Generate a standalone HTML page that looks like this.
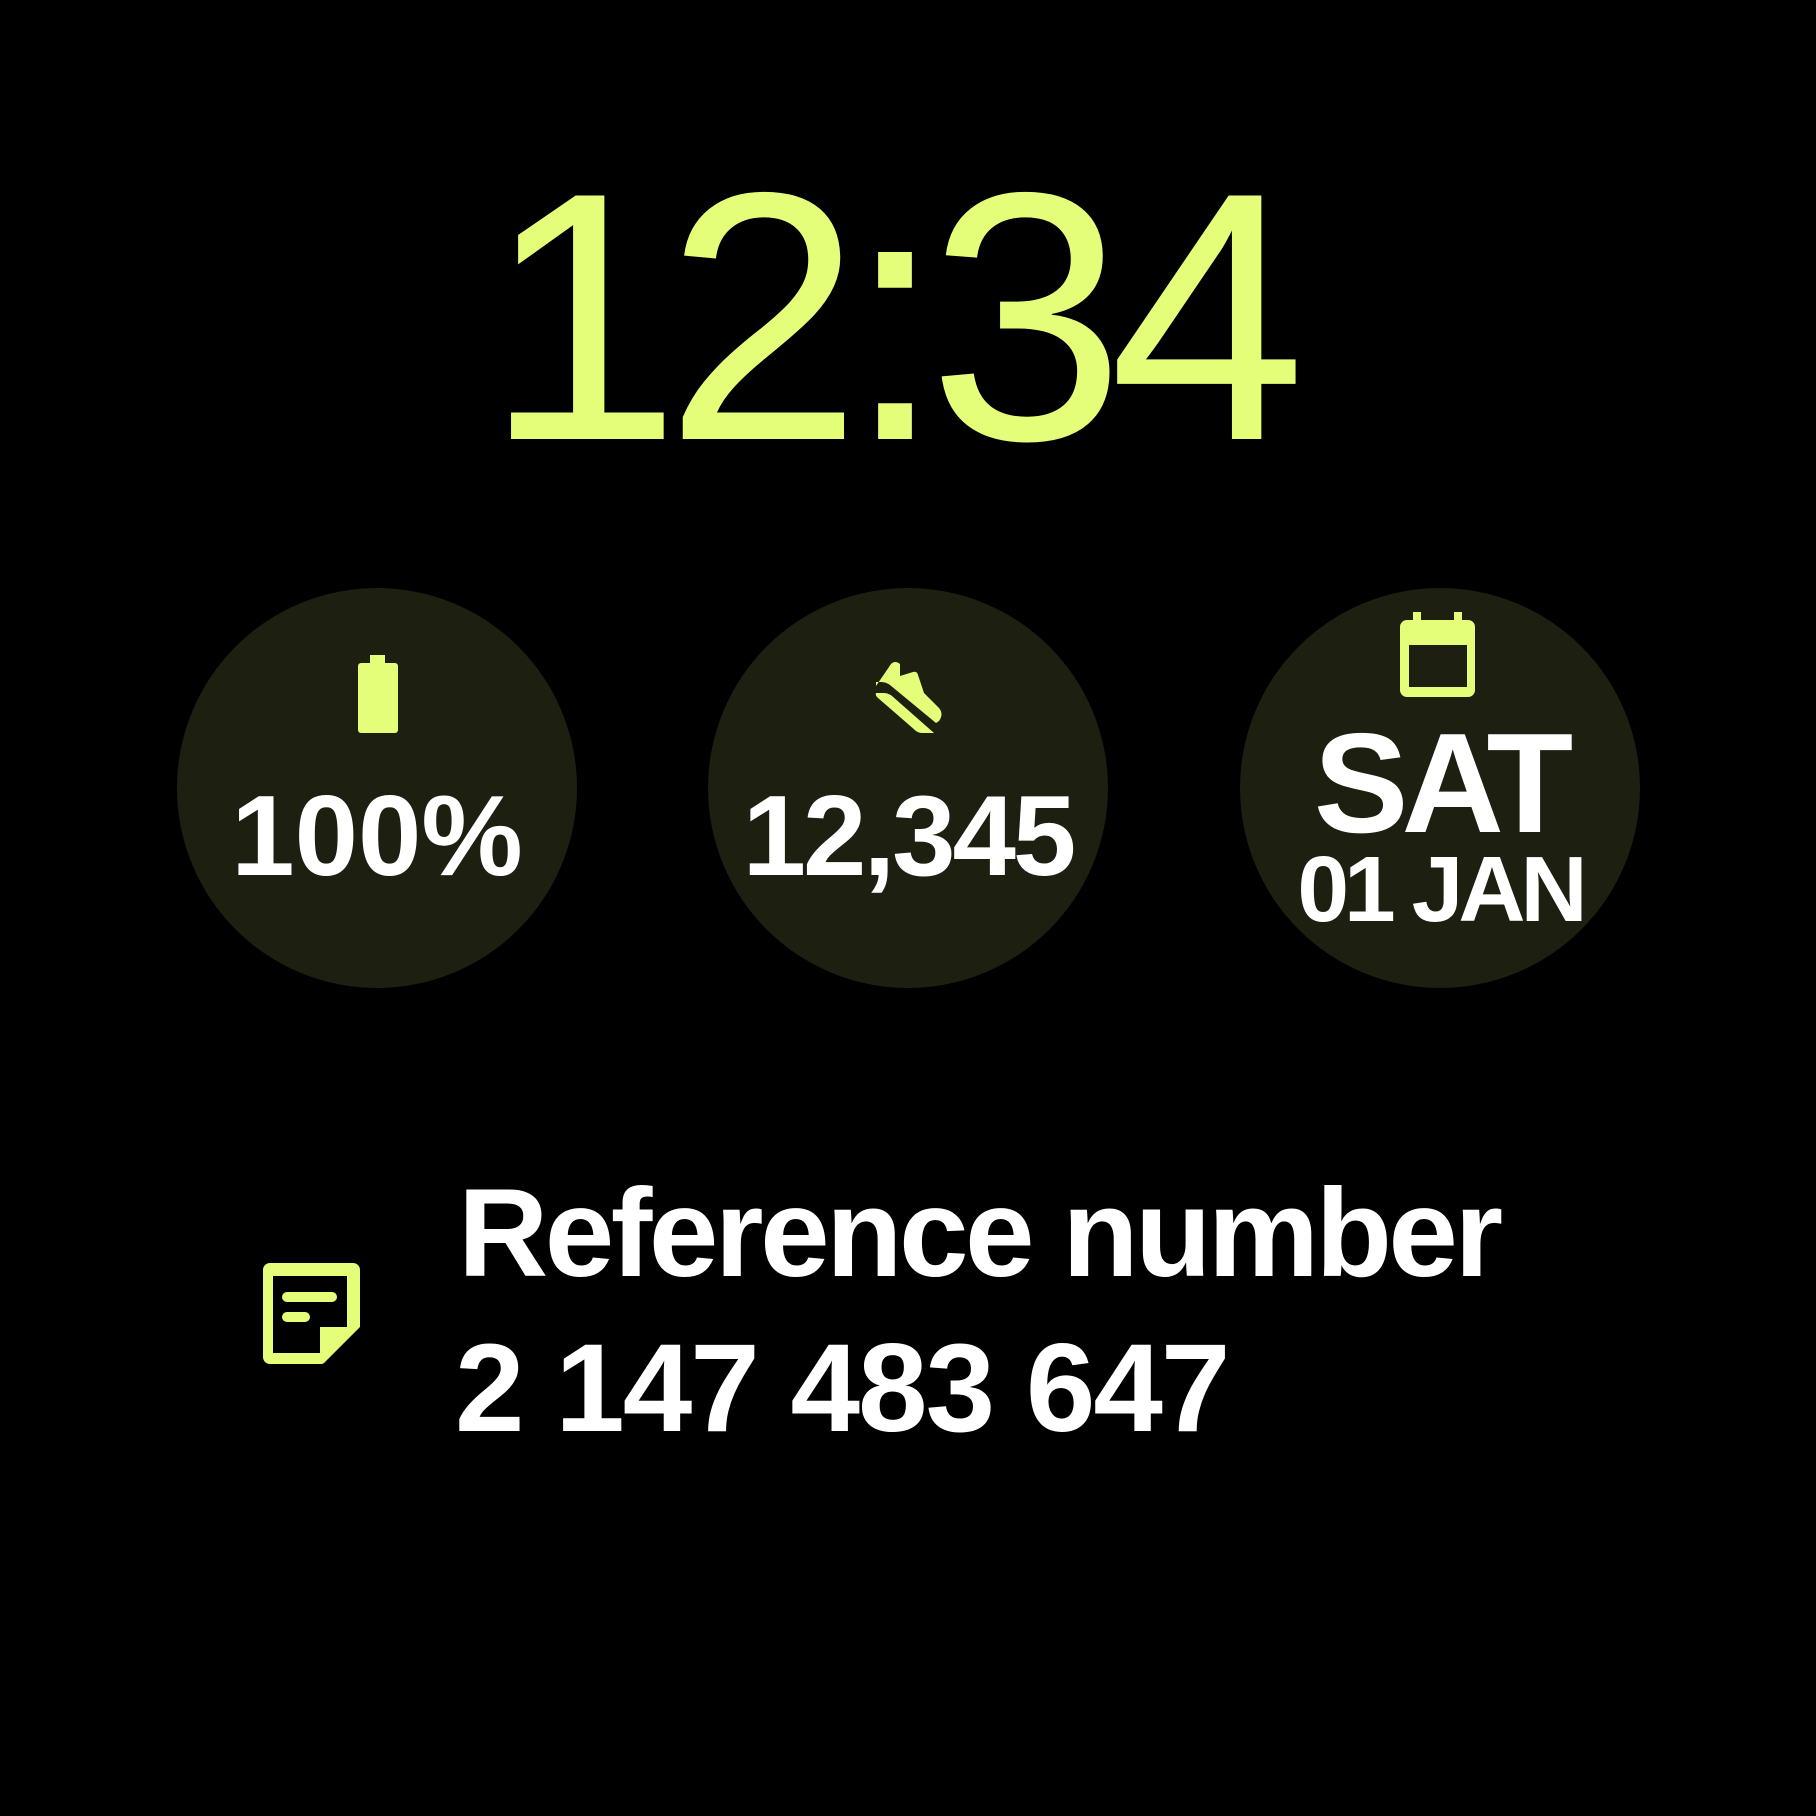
<!DOCTYPE html>
<html><head><style>
body{margin:0;width:1816px;height:1816px;background:#000;position:relative;overflow:hidden;font-family:"Liberation Sans",sans-serif}
.t{position:absolute;white-space:nowrap;line-height:1}
.c{position:absolute;width:400px;height:400px;border-radius:50%;background:#1d1f10;top:588px}
</style></head><body>
<div class="t" style="left:-16px;width:1806px;text-align:center;top:141px;font-size:354px;color:#e4fe7a;letter-spacing:-16px">12:34</div>
<div class="c" style="left:177px"></div>
<div class="c" style="left:708px"></div>
<div class="c" style="left:1240px"></div>
<svg width="1816" height="1816" style="position:absolute;left:0;top:0">
<g fill="#e4fe7a">
<rect x="370" y="655" width="15" height="12"/>
<rect x="358" y="663" width="40" height="70" rx="3"/>
<path d="M1400 627a7 7 0 0 1 7-7h61a7 7 0 0 1 7 7v63a7 7 0 0 1-7 7h-61a7 7 0 0 1-7-7zM1409 645v42h58v-42z" fill-rule="evenodd"/>
<rect x="1413" y="612" width="8" height="10"/><rect x="1454" y="612" width="8" height="10"/>
<path d="M876 686l15-22q4-4 9 0v12l13-4q4-1 5 3l6 18 15 15q5 6 0 13l-3 2-46-38q-4-3-9-3h-5z"/>
<path d="M876 693h8q4 0 8 3l42 37h-12q-3 0-6-2l-38-33q-3-3-2-5z"/>
<path d="M270 1263h83a7 7 0 0 1 7 7v57l-35 35a5 5 0 0 1-4 2h-51a7 7 0 0 1-7-7v-87a7 7 0 0 1 7-7zM273 1276v77h47v-26h27v-51z" fill-rule="evenodd"/>
<rect x="282" y="1292" width="55" height="10" rx="5"/><rect x="282" y="1312" width="28" height="10" rx="5"/>
</g></svg>
<div class="t" style="left:177px;width:400px;text-align:center;top:780px;font-size:114px;font-weight:bold;color:#fff">100%</div>
<div class="t" style="left:708px;width:400px;text-align:center;top:780px;font-size:114px;font-weight:bold;color:#fff;letter-spacing:-3px">12,345</div>
<div class="t" style="left:1240px;width:400px;text-align:center;top:713px;font-size:142px;font-weight:bold;color:#fff;letter-spacing:-7px">SAT</div>
<div class="t" style="left:1240px;width:400px;text-align:center;top:843px;font-size:93px;font-weight:bold;color:#fff;letter-spacing:-5px">01 JAN</div>
<div class="t" style="left:458px;top:1171px;font-size:125px;font-weight:bold;color:#fff;letter-spacing:-3.5px">Reference number</div>
<div class="t" style="left:455px;top:1326px;font-size:125px;font-weight:bold;color:#fff;letter-spacing:-2px">2 147 483 647</div>
</body></html>
